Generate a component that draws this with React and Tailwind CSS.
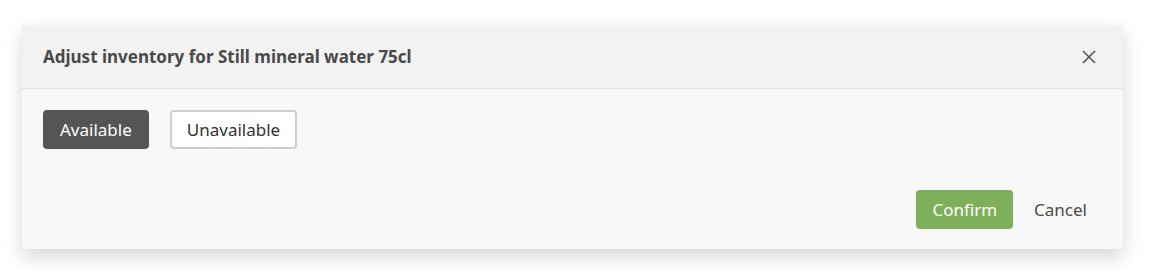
import React, { useState } from "react";

const AdjustInventoryModal = () => {
  const [status, setStatus] = useState("available");

  return (
    <div className="w-[1101px] bg-[#f8f8f8] shadow-[0_8px_18px_rgba(0,0,0,0.16)]">
      {/* Header */}
      <div className="flex h-[64px] items-center justify-between border-b border-[#e3e3e3] bg-[#f2f2f2] pl-[21px] pr-[24px]">
        <h2 className="text-[17px] font-bold text-[#4a4a4a]">
          Adjust inventory for Still mineral water 75cl
        </h2>
        <button className="flex h-5 w-5 items-center justify-center text-[#555]">
          <svg viewBox="0 0 14 14" className="h-[14px] w-[14px]" fill="none" stroke="currentColor" strokeWidth="1.6">
            <path d="M1 1 L13 13 M13 1 L1 13" />
          </svg>
        </button>
      </div>

      {/* Body */}
      <div className="flex gap-[21px] px-[21px] pt-[21px]">
        <button
          onClick={() => setStatus("available")}
          className={`h-[39px] rounded-[4px] px-[17px] text-[17px] ${
            status === "available"
              ? "bg-[#555555] text-white"
              : "border-2 border-[#cfcfcf] bg-white text-[#333]"
          }`}
        >
          Available
        </button>
        <button
          onClick={() => setStatus("unavailable")}
          className={`h-[39px] rounded-[4px] px-[15px] text-[17px] ${
            status === "unavailable"
              ? "bg-[#555555] text-white"
              : "border-2 border-[#cfcfcf] bg-white text-[#333]"
          }`}
        >
          Unavailable
        </button>
      </div>

      {/* Footer */}
      <div className="flex items-center justify-end gap-[21px] pb-[20px] pr-[36px] pt-[41px]">
        <button className="h-[39px] rounded-[4px] bg-[#7eb05a] px-[16px] text-[17px] text-white">
          Confirm
        </button>
        <button className="text-[17px] text-[#4a4a4a]">Cancel</button>
      </div>
    </div>
  );
};

export default function App() {
  return (
    <div
      className="min-h-[279px] bg-white pl-[22px] pt-[25px]"
      style={{ fontFamily: '"Noto Sans", "Open Sans", sans-serif' }}
    >
      <AdjustInventoryModal />
    </div>
  );
}
